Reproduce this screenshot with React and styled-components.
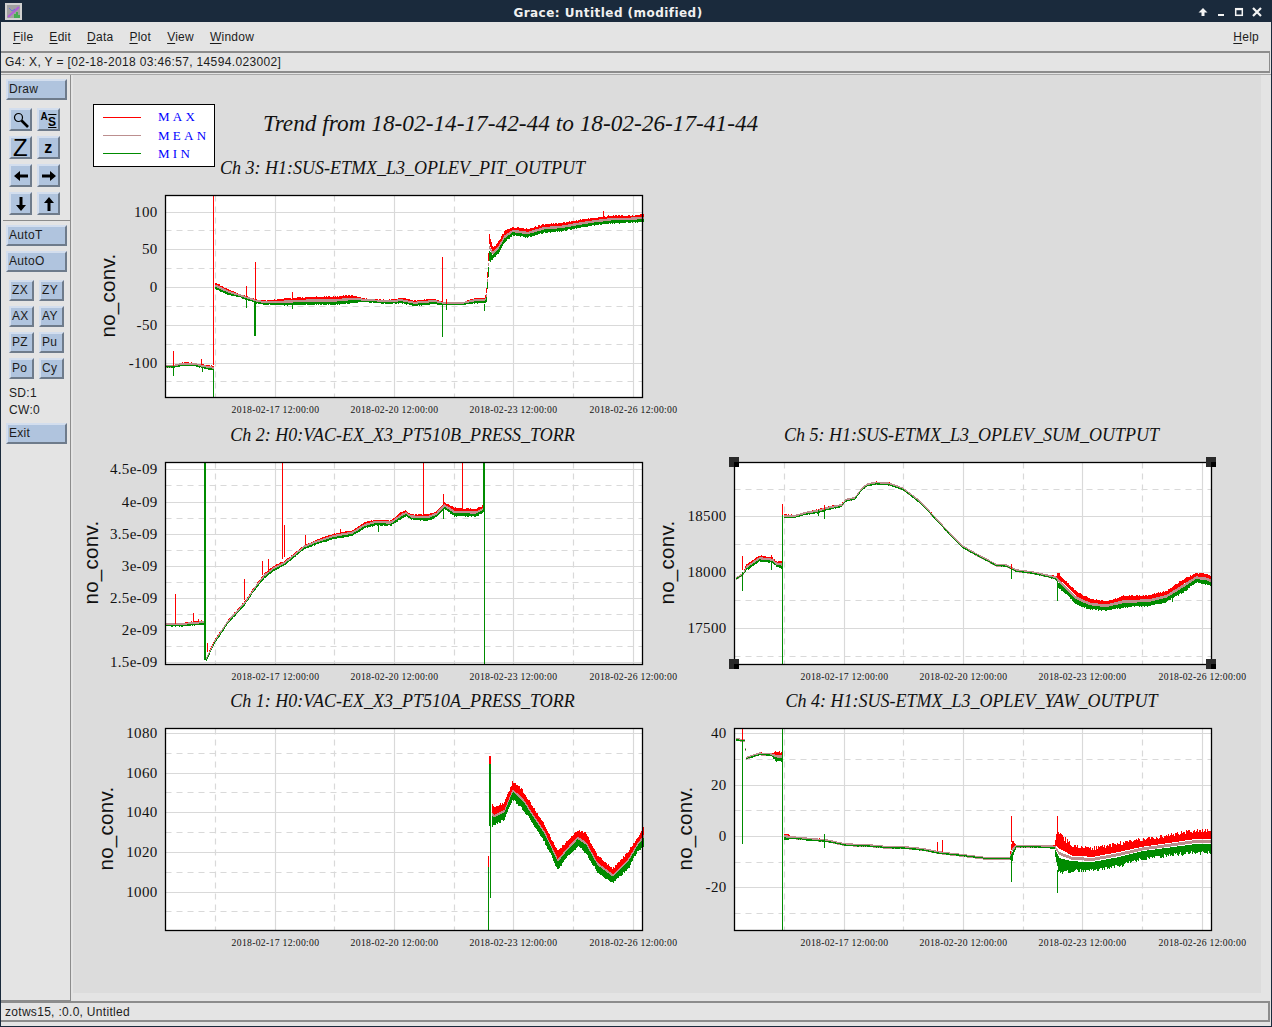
import React from "react";
import styled, { createGlobalStyle } from "styled-components";

const GlobalStyle = createGlobalStyle`
  html, body {
    margin: 0;
    padding: 0;
    background: #e4e4e4;
    font-family: "Liberation Sans", Arial, sans-serif;
  }
`;

/// WINDOW
const Win = styled.div`
  box-sizing: border-box;
  width: 1272px;
  height: 1027px;
  display: flex;
  flex-direction: column;
  background: #e4e4e4;
  color: #1c1c1c;
  font-size: 12px;
  letter-spacing: 0.3px;
  border: 1px solid #1a2a3c;
  border-top: 0;
  overflow: hidden;
`;

const TitleBar = styled.div`
  flex: none;
  height: 22px;
  display: flex;
  align-items: center;
  padding: 0 5px 0 4px;
  background: #1a2a3c;
`;

const TitleText = styled.div`
  flex: 1;
  padding-top: 3px;
  text-align: center;
  color: #f0f0f0;
  font: bold 12px "DejaVu Sans", sans-serif;
  letter-spacing: 0.45px;
`;

const WinButtons = styled.div`
  display: flex;
`;

const MenuBar = styled.div`
  flex: none;
  box-sizing: border-box;
  height: 29px;
  display: flex;
  align-items: center;
  padding: 0 12px;
  gap: 16px;
  letter-spacing: 0.25px;
`;

const MenuItem = styled.span`
  u {
    text-underline-offset: 2px;
  }
  &:last-child {
    margin-left: auto;
  }
`;

const Locator = styled.div`
  flex: none;
  box-sizing: border-box;
  height: 22px;
  display: flex;
  align-items: center;
  padding-left: 4px;
  margin-right: 1px;
  letter-spacing: 0.35px;
  border: 2px solid #8c8c8c;
  border-width: 2px 1px 2px 0;
`;

const Body = styled.div`
  flex: 1;
  min-height: 0;
  display: flex;
  margin-top: 1px;
  border-top: 1px solid #a8a8a8;
`;

/// SIDEBAR
const Sidebar = styled.div`
  box-sizing: border-box;
  flex: none;
  width: 70px;
  display: flex;
  flex-direction: column;
  align-items: flex-start;
  padding: 4px 0 0 5px;
  border-right: 1px solid #8c8c8c;
  border-bottom: 1px solid #8c8c8c;
`;

const Bevel = styled.button`
  box-sizing: border-box;
  margin: 0;
  padding: 0 0 2px;
  background: #b0c4de;
  color: #1c1c1c;
  font: 12px "Liberation Sans", Arial, sans-serif;
  letter-spacing: 0.3px;
  border: 2px solid;
  border-color: #d3deee #6e7b8b #6e7b8b #d3deee;
  display: flex;
  align-items: center;
  justify-content: center;
`;

const WideButton = styled(Bevel)`
  width: 61px;
  height: 21px;
  padding-left: 1px;
  justify-content: flex-start;
  margin-top: ${(p) => p.$top}px;
`;

const SmallButton = styled(Bevel)`
  padding-left: 1px;
  justify-content: flex-start;
`;

const IconGrid = styled.div`
  display: grid;
  grid-template-columns: repeat(2, 23px);
  grid-auto-rows: 23px;
  gap: 5px;
  margin: 8px 0 0 3px;
`;

const IconButton = styled(Bevel)`
  padding: 0;
  color: #000;
  font-weight: ${(p) => (p.$thin ? "normal" : "bold")};
  font-size: ${(p) => p.$size || 12}px;
  line-height: 1;
`;

const RaisedLetter = styled.span`
  font-size: 10px;
  transform: translateY(-3px);
`;

const LoweredLetter = styled.span`
  font-size: 12px;
  transform: translateY(2px);
  text-decoration: underline overline;
  text-decoration-thickness: 1px;
`;

const Divider = styled.div`
  align-self: stretch;
  height: 1px;
  margin: 5px 0 0 -3px;
  background: #8c8c8c;
`;

const SmallGrid = styled.div`
  display: grid;
  grid-template-columns: repeat(2, 25px);
  grid-auto-rows: 21px;
  gap: 5px;
  margin: 8px 0 0 3px;
`;

const SideLabel = styled.div`
  height: 17px;
  line-height: 17px;
  margin-left: 3px;
`;

const SideLabels = styled.div`
  margin-top: 6px;
`;

/// CANVAS
const Canvas = styled.div`
  flex: none;
  width: 1188px;
  height: 918px;
  margin: 0 0 8px 2px;
  background: #dcdcdc;
`;

const CanvasHeader = styled.div`
  display: flex;
  align-items: flex-start;
  height: 83px;
`;

const Legend = styled.div`
  box-sizing: border-box;
  flex: none;
  width: 122px;
  height: 63px;
  margin: 29px 0 0 20px;
  padding: 3px 0 0 9px;
  background: #fff;
  border: 1px solid #000;
`;

const LegendRow = styled.div`
  height: 18.4px;
  display: flex;
  align-items: center;
  gap: 17px;
  color: #0000ff;
  font: 13px "Liberation Serif", "Times New Roman", serif;
  letter-spacing: 3.3px;
`;

const LegendLine = styled.i`
  width: 38px;
  height: 1px;
  background: ${(p) => p.$color};
`;

const PlotTitle = styled.div`
  font: italic 23.3px "Liberation Serif", "Times New Roman", serif;
  letter-spacing: 0;
  color: #111;
  margin: 35px 0 0 48px;
  white-space: nowrap;
`;

const PlotGrid = styled.div`
  display: grid;
  grid-template-columns: 569px 569px;
  grid-template-rows: 267px 266px 267px;
`;

const PlotCell = styled.div`
  min-width: 0;
`;

const ChannelTitle = styled.div`
  box-sizing: border-box;
  height: 37px;
  width: 477px;
  margin-left: 91px;
  font: italic 18px/20px "Liberation Serif", "Times New Roman", serif;
  letter-spacing: 0;
  text-align: center;
  white-space: nowrap;
  color: #111;
`;

const PlotSvg = styled.svg`
  display: block;
  overflow: visible;
  text {
    fill: #111;
  }
`;

const StatusBar = styled.div`
  flex: none;
  box-sizing: border-box;
  height: 21px;
  margin: 0 1px 4px 0;
  padding-left: 4px;
  display: flex;
  align-items: center;
  border: 2px solid #8c8c8c;
  border-left-width: 0;
`;

/// DATA — curve points are [x, top, bottom] read off a 3x blow-up of each plot
const RED = "#ff0000";
const MEAN = "#bc8f8f";
const GREEN = "#008b00";
const GRID = "#d9d9d9";

const X_MAJOR = [110, 229, 348, 468];
const X_MINOR = [50, 169, 289, 408];
const X_LABELS = ["2018-02-17 12:00:00", "2018-02-20 12:00:00", "2018-02-23 12:00:00", "2018-02-26 12:00:00"];

const CHANNELS = [
  {
    title: "Ch 3: H1:SUS-ETMX_L3_OPLEV_PIT_OUTPUT",
    ylabelX: -51,
    major: [[17, "100"], [54, "50"], [92, "0"], [130, "-50"], [168, "-100"]],
    minor: [35, 73, 111, 149, 186],
    ox: 16,
    oy: 16,
    segs: [
      [[16, 527, 531], [40, 524, 531], [65, 518, 526], [100, 518, 526], [125, 524, 534], [158, 528, 540]],
      [[162, 278, 296], [200, 298, 312], [240, 314, 322], [285, 328, 338], [310, 332, 342], [380, 326, 344], [440, 322, 342], [520, 321, 342], [570, 316, 338], [610, 326, 334], [680, 330, 340], [720, 324, 338], [760, 332, 346], [820, 327, 340], [850, 338, 344], [900, 338, 344], [940, 325, 338], [972, 325, 338], [976, 295, 335], [980, 230, 280], [985, 135, 210], [995, 175, 205], [1010, 160, 190], [1030, 125, 155], [1055, 112, 134], [1100, 118, 140], [1150, 104, 125], [1200, 100, 122], [1250, 92, 112], [1300, 84, 104], [1350, 78, 98], [1400, 78, 96], [1447, 74, 94]],
    ],
    spikes: [
      [160, 16, 525, RED], [160, 540, 622, GREEN], [40, 483, 527, RED], [40, 530, 558, GREEN],
      [125, 507, 525, RED], [127, 534, 545, GREEN], [285, 216, 330, RED], [285, 338, 438, GREEN, 2],
      [260, 288, 320, RED], [260, 322, 353, GREEN], [848, 201, 335, RED], [848, 345, 441, GREEN],
      [972, 340, 362, GREEN], [858, 340, 360, GREEN], [858, 327, 340, RED], [1330, 63, 80, RED],
      [397, 306, 325, RED], [397, 342, 356, GREEN],
    ],
  },
  null,
  {
    title: "Ch 2: H0:VAC-EX_X3_PT510B_PRESS_TORR",
    ylabelX: -68,
    major: [[7, "4.5e-09"], [40, "4e-09"], [72, "3.5e-09"], [104, "3e-09"], [136, "2.5e-09"], [168, "2e-09"], [200, "1.5e-09"]],
    minor: [23, 56, 88, 120, 152, 184],
    ox: 16,
    oy: 22,
    segs: [
      [[16, 504, 512], [60, 505, 513], [90, 500, 510], [133, 497, 507]],
      [[136, 605, 617], [160, 555, 565], [200, 495, 505], [250, 440, 450], [280, 395, 405], [310, 355, 368], [340, 332, 345], [370, 318, 330], [400, 295, 305], [430, 270, 280], [470, 253, 265], [520, 236, 250], [575, 226, 240], [610, 203, 218], [640, 195, 210], [690, 196, 210], [720, 172, 190], [735, 167, 182], [750, 178, 192], [800, 178, 195], [825, 170, 185], [850, 143, 160], [880, 160, 182], [945, 163, 182], [970, 150, 170]],
    ],
    spikes: [
      [135, 22, 615, GREEN, 2], [972, 22, 170, GREEN, 2], [972, 170, 628, GREEN],
      [46, 417, 505, RED], [100, 472, 500, RED], [115, 490, 500, RED], [142, 562, 590, RED],
      [253, 370, 435, RED], [307, 318, 358, RED], [325, 312, 350, RED], [367, 22, 310, RED],
      [373, 208, 305, RED], [436, 238, 270, RED], [541, 222, 236, RED], [790, 22, 178, RED],
      [850, 117, 143, RED], [907, 22, 165, RED], [655, 205, 230, GREEN], [850, 160, 192, GREEN],
    ],
  },
  {
    title: "Ch 5: H1:SUS-ETMX_L3_OPLEV_SUM_OUTPUT",
    ylabelX: -61,
    selected: true,
    major: [[54, "18500"], [110, "18000"], [166, "17500"]],
    minor: [27, 82, 138, 194],
    ox: 28,
    oy: 22,
    segs: [
      [[30, 368, 372], [50, 355, 360], [60, 330, 345], [100, 302, 318], [140, 308, 322], [150, 320, 332], [170, 318, 340]],
      [[175, 178, 188], [205, 180, 188], [240, 170, 178], [280, 162, 172], [300, 155, 165], [345, 147, 155], [360, 132, 138], [385, 127, 133], [410, 95, 102], [425, 85, 92], [450, 80, 87], [490, 83, 90], [530, 98, 104], [580, 135, 142], [630, 188, 195], [670, 232, 238], [710, 272, 278], [750, 295, 300], [810, 327, 332], [840, 328, 334], [870, 344, 349], [920, 350, 355], [990, 364, 372], [995, 355, 395], [1010, 370, 405], [1050, 410, 445], [1090, 432, 460], [1140, 440, 465], [1190, 425, 455], [1270, 422, 450], [1320, 410, 438], [1370, 375, 410], [1410, 355, 380], [1440, 358, 385], [1458, 365, 392]],
    ],
    spikes: [
      [172, 145, 180, RED], [172, 180, 628, GREEN], [52, 303, 345, RED], [52, 350, 407, GREEN],
      [140, 298, 310, RED], [140, 320, 345, GREEN], [280, 165, 183, GREEN], [298, 165, 192, GREEN],
      [298, 150, 165, RED], [858, 325, 340, RED], [858, 340, 372, GREEN], [998, 395, 437, GREEN],
      [1342, 420, 440, GREEN],
    ],
  },
  {
    title: "Ch 1: H0:VAC-EX_X3_PT510A_PRESS_TORR",
    ylabelX: -53,
    fill: 0.43,
    noise: 0.14,
    major: [[5, "1080"], [45, "1060"], [84, "1040"], [124, "1020"], [164, "1000"]],
    minor: [25, 64, 104, 144, 183],
    ox: 16,
    oy: 25,
    segs: [
      [[992, 248, 315], [1000, 265, 310], [1030, 250, 295], [1055, 188, 235], [1085, 215, 262], [1120, 270, 315], [1150, 315, 360], [1190, 398, 445], [1215, 370, 412], [1250, 332, 375], [1275, 345, 395], [1310, 410, 455], [1355, 448, 485], [1400, 400, 445], [1430, 355, 390], [1447, 325, 375]],
    ],
    spikes: [
      [985, 408, 440, RED], [985, 440, 631, GREEN], [990, 108, 130, RED, 2], [990, 130, 318, GREEN, 2], [990, 318, 533, GREEN],
    ],
  },
  {
    title: "Ch 4: H1:SUS-ETMX_L3_OPLEV_YAW_OUTPUT",
    ylabelX: -43,
    noise: 0.2,
    major: [[5, "40"], [57, "20"], [108, "0"], [159, "-20"]],
    minor: [31, 82, 134, 185],
    ox: 28,
    oy: 25,
    segs: [
      [[30, 56, 60], [57, 59, 63], [59, 110, 116], [62, 112, 116], [100, 98, 104], [135, 102, 106], [150, 97, 120], [170, 100, 120]],
      [[174, 340, 358], [200, 350, 355], [270, 356, 362], [300, 358, 364], [360, 372, 376], [420, 372, 378], [480, 380, 383], [540, 380, 385], [590, 385, 390], [640, 395, 400], [700, 403, 406], [780, 413, 416], [850, 412, 416], [858, 365, 415], [870, 375, 380], [950, 377, 382], [985, 376, 385], [990, 350, 420], [1000, 350, 450], [1040, 385, 445], [1100, 390, 445], [1180, 375, 430], [1250, 362, 410], [1330, 350, 400], [1400, 338, 392], [1458, 335, 392]],
    ],
    spikes: [
      [52, 25, 60, RED], [52, 60, 370, GREEN], [172, 25, 630, GREEN], [858, 288, 365, RED],
      [858, 415, 485, GREEN], [997, 288, 350, RED], [997, 450, 518, GREEN], [637, 365, 392, RED],
      [652, 358, 395, RED], [298, 342, 384, GREEN],
    ],
  },
];

// small seeded generator so every run draws the same noise
const makeRandom = (seed) => () => {
  seed = (seed * 16807) % 2147483647;
  return seed / 2147483647;
};

const lerpAt = (points, x) => {
  let i = 0;
  while (i < points.length - 2 && points[i + 1][0] < x) i++;
  const [x0, a0, b0] = points[i];
  const [x1, a1, b1] = points[i + 1];
  const t = Math.min(1, Math.max(0, (x - x0) / (x1 - x0)));
  return [a0 + (a1 - a0) * t, b0 + (b1 - b0) * t];
};

const buildBands = (ch, seed) => {
  const random = makeRandom(seed);
  const fill = ch.fill || 0.36;
  const noise = ch.noise || 0.12;
  let red = "";
  let mean = "";
  let green = "";
  ch.segs.forEach((seg) => {
    const from = Math.ceil((seg[0][0] - ch.ox) / 3);
    const to = Math.floor((seg[seg.length - 1][0] - ch.ox) / 3);
    for (let px = from; px <= to; px++) {
      const [a, b] = lerpAt(seg, px * 3 + ch.ox);
      const top = (a - ch.oy) / 3;
      const bottom = (b - ch.oy) / 3;
      const spread = bottom - top;
      const jitter = noise * spread + 0.3;
      const band = Math.max(1, spread * fill);
      const mid = (top + bottom) / 2;
      const x = px + 0.5;
      red += `M${x} ${(top - random() * jitter).toFixed(1)}V${(top + band).toFixed(1)}`;
      mean += `M${x} ${(mid - 1.5).toFixed(1)}V${(mid + 1.5).toFixed(1)}`;
      green += `M${x} ${(bottom - band).toFixed(1)}V${(bottom + random() * jitter).toFixed(1)}`;
    }
  });
  return { red, mean, green };
};

const SvgIcon = ({ d, size = 18 }) => (
  <svg width={size} height={size} viewBox="0 0 18 18" fill="#000">
    <path d={d} />
  </svg>
);

const Plot = ({ ch, seed }) => {
  const bands = buildBands(ch, seed);
  return (
    <PlotCell>
      <ChannelTitle>{ch.title}</ChannelTitle>
      <PlotSvg width="569" height="230">
        <g transform="translate(92.5 0.5)">
          <rect width="477" height="202" fill="#fff" />
          {ch.major.map(([y]) => (
            <line key={y} x1="0" x2="477" y1={y} y2={y} stroke={GRID} strokeWidth="1.2" />
          ))}
          {ch.minor.map((y) => (
            <line key={y} x1="0" x2="477" y1={y} y2={y} stroke={GRID} strokeWidth="1.2" strokeDasharray="6 5" />
          ))}
          {X_MAJOR.map((x) => (
            <line key={x} x1={x} x2={x} y1="0" y2="202" stroke={GRID} strokeWidth="1.2" />
          ))}
          {X_MINOR.map((x) => (
            <line key={x} x1={x} x2={x} y1="0" y2="202" stroke={GRID} strokeWidth="1.2" strokeDasharray="6 5" />
          ))}
          <g fill="none" strokeWidth="1" shapeRendering="crispEdges">
            <path d={bands.red} stroke={RED} />
            <path d={bands.mean} stroke={MEAN} />
            <path d={bands.green} stroke={GREEN} />
            {ch.spikes.map(([x, y1, y2, color, w], i) => (
              <line
                key={i}
                x1={(x - ch.ox) / 3}
                x2={(x - ch.ox) / 3}
                y1={(y1 - ch.oy) / 3}
                y2={(y2 - ch.oy) / 3}
                stroke={color}
                strokeWidth={w || 1}
              />
            ))}
          </g>
          <rect width="477" height="202" fill="none" stroke="#000" strokeWidth="1.3" />
          {ch.major.map(([y, label]) => (
            <text key={y} x="-8" y={y + 4} textAnchor="end" fontFamily="Liberation Serif" fontSize="15">
              {label}
            </text>
          ))}
          {X_MAJOR.map((x, i) => (
            <text key={x} x={x} y="217" textAnchor="middle" fontFamily="Liberation Serif" fontSize="9.7">
              {X_LABELS[i]}
            </text>
          ))}
          <text
            transform={`translate(${ch.ylabelX} 100) rotate(-90)`}
            textAnchor="middle"
            fontFamily="Liberation Sans"
            fontSize="20.5"
          >
            no_conv.
          </text>
          {ch.selected &&
            [[0, 0], [477, 0], [0, 202], [477, 202]].map(([x, y]) => (
              <g key={x + "-" + y} transform={`translate(${x - 0.5} ${y - 0.5})`}>
                <rect x="-5" y="-5" width="10" height="10" fill="#2a2a2a" />
                <rect x="0" y="0" width="5" height="5" fill="#000" />
              </g>
            ))}
        </g>
      </PlotSvg>
    </PlotCell>
  );
};

const MENUS = ["File", "Edit", "Data", "Plot", "View", "Window", "Help"];

const ARROWS = {
  left: "M2 9l6-5v3.5h8v3H8V14z",
  right: "M16 9l-6-5v3.5H2v3h8V14z",
  down: "M9 16l-5-6h3.5V2h3v8H14z",
  up: "M9 2l-5 6h3.5v8h3V8H14z",
};

const SMALL = ["ZX", "ZY", "AX", "AY", "PZ", "Pu", "Po", "Cy"];

export default function App() {
  return (
    <>
      <GlobalStyle />
      <Win>
        <TitleBar>
          <svg width="17" height="17" viewBox="0 0 17 17">
            <rect width="17" height="17" fill="#d0d0d0" />
            <rect x="2" y="2" width="13" height="13" fill="#a0a0a0" />
            <path d="M3 14L14 4" stroke="#b060d8" strokeWidth="2" />
            <path d="M4 5l3 3 3-2" stroke="#6a7ad0" fill="none" />
            <path d="M10 15v-4M12 15v-6M14 15v-3" stroke="#30b040" strokeWidth="1.6" />
          </svg>
          <TitleText>Grace: Untitled (modified)</TitleText>
          <WinButtons>
            <svg width="18" height="22" viewBox="0 0 18 22" fill="#f4f4f4">
              <path d="M9 8l-4.5 4.5H7.5V16h3v-3.5h3z" />
            </svg>
            <svg width="18" height="22" viewBox="0 0 18 22" fill="#f4f4f4">
              <rect x="6" y="14" width="6" height="2" />
            </svg>
            <svg width="18" height="22" viewBox="0 0 18 22" fill="none" stroke="#f4f4f4" strokeWidth="1.5">
              <rect x="5.7" y="8.7" width="6.6" height="6.6" />
              <path d="M5 9.2h8" strokeWidth="2" />
            </svg>
            <svg width="18" height="22" viewBox="0 0 18 22" fill="none" stroke="#f4f4f4" strokeWidth="2.2">
              <path d="M5 8l8 8M13 8l-8 8" />
            </svg>
          </WinButtons>
        </TitleBar>

        <MenuBar>
          {MENUS.map((name) => (
            <MenuItem key={name}>
              <u>{name[0]}</u>
              {name.slice(1)}
            </MenuItem>
          ))}
        </MenuBar>

        <Locator>G4: X, Y = [02-18-2018 03:46:57, 14594.023002]</Locator>

        <Body>
          <Sidebar>
            <WideButton $top={0}>Draw</WideButton>
            <IconGrid>
              <IconButton aria-label="zoom">
                <svg width="18" height="18" viewBox="0 0 18 18" fill="none" stroke="#000">
                  <circle cx="6.5" cy="6.5" r="4" strokeWidth="1.2" />
                  <path d="M9.5 9.5l6.5 6.5" strokeWidth="2.6" />
                </svg>
              </IconButton>
              <IconButton>
                <RaisedLetter>A</RaisedLetter>
                <LoweredLetter>S</LoweredLetter>
              </IconButton>
              <IconButton $size={24} $thin>Z</IconButton>
              <IconButton $size={16}>z</IconButton>
              <IconButton aria-label="left"><SvgIcon d={ARROWS.left} /></IconButton>
              <IconButton aria-label="right"><SvgIcon d={ARROWS.right} /></IconButton>
              <IconButton aria-label="down"><SvgIcon d={ARROWS.down} /></IconButton>
              <IconButton aria-label="up"><SvgIcon d={ARROWS.up} /></IconButton>
            </IconGrid>
            <Divider />
            <WideButton $top={4}>AutoT</WideButton>
            <WideButton $top={5}>AutoO</WideButton>
            <SmallGrid>
              {SMALL.map((name) => (
                <SmallButton key={name}>{name}</SmallButton>
              ))}
            </SmallGrid>
            <SideLabels>
              <SideLabel>SD:1</SideLabel>
              <SideLabel>CW:0</SideLabel>
            </SideLabels>
            <WideButton $top={4}>Exit</WideButton>
          </Sidebar>

          <Canvas>
            <CanvasHeader>
              <Legend>
                <LegendRow><LegendLine $color={RED} />MAX</LegendRow>
                <LegendRow><LegendLine $color={MEAN} />MEAN</LegendRow>
                <LegendRow><LegendLine $color={GREEN} />MIN</LegendRow>
              </Legend>
              <PlotTitle>Trend from 18-02-14-17-42-44 to 18-02-26-17-41-44</PlotTitle>
            </CanvasHeader>
            <PlotGrid>
              {CHANNELS.map((ch, i) => (ch ? <Plot key={i} ch={ch} seed={1234 + i * 77} /> : <PlotCell key={i} />))}
            </PlotGrid>
          </Canvas>
        </Body>

        <StatusBar>zotws15, :0.0, Untitled</StatusBar>
      </Win>
    </>
  );
}
